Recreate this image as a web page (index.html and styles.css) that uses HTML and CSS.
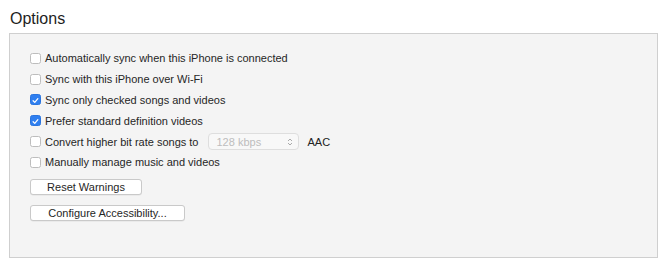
FILE: index.html
```html
<!DOCTYPE html>
<html>
<head>
<meta charset="utf-8">
<link rel="stylesheet" href="styles.css">
</head>
<body>
<h1 class="title">Options</h1>
<div class="panel">
  <label class="row"><span class="cb"></span><span>Automatically sync when this iPhone is connected</span></label>
  <label class="row"><span class="cb"></span><span>Sync with this iPhone over Wi-Fi</span></label>
  <label class="row"><span class="cb on"><svg viewBox="0 0 11 11" width="11" height="11"><path d="M2.6 5.8 L4.6 7.8 L8.4 3.2" fill="none" stroke="#fff" stroke-width="1.5" stroke-linecap="round" stroke-linejoin="round"/></svg></span><span>Sync only checked songs and videos</span></label>
  <label class="row"><span class="cb on"><svg viewBox="0 0 11 11" width="11" height="11"><path d="M2.6 5.8 L4.6 7.8 L8.4 3.2" fill="none" stroke="#fff" stroke-width="1.5" stroke-linecap="round" stroke-linejoin="round"/></svg></span><span>Prefer standard definition videos</span></label>
  <div class="row"><span class="cb"></span><span>Convert higher bit rate songs to</span>
    <span class="select"><span>128 kbps</span><svg viewBox="0 0 6 10" width="6" height="10"><path d="M1 4 L3 2 L5 4 M1 6 L3 8 L5 6" fill="none" stroke="#aaa" stroke-width="1"/></svg></span>
    <span class="aac">AAC</span></div>
  <label class="row"><span class="cb"></span><span>Manually manage music and videos</span></label>
  <div class="buttons">
    <button class="btn reset">Reset Warnings</button>
    <button class="btn config">Configure Accessibility...</button>
  </div>
</div>
</body>
</html>
```
FILE: styles.css
```css
html, body {
  margin: 0;
  padding: 0;
  background: #fff;
  font-family: "Liberation Sans", Arial, sans-serif;
  color: #222;
}
.title {
  margin: 0;
  padding: 9px 0 0 10px;
  height: 24px;
  font-size: 16px;
  font-weight: normal;
  line-height: 19px;
  color: #1e1e1e;
}
.panel {
  margin-left: 9px;
  width: 647px;
  height: 209px;
  border: 1px solid #cfcfcf;
  background: #f4f4f4;
  box-sizing: content-box;
  display: flex;
  flex-direction: column;
  padding-top: 14px;
}
.row {
  display: flex;
  align-items: center;
  height: 20.8px;
  padding-left: 20px;
  font-size: 11px;
  color: #262626;
}
.cb {
  width: 11px;
  height: 11px;
  box-sizing: border-box;
  border: 1px solid #bdbdbd;
  border-radius: 2.5px;
  background: #fff;
  margin-right: 4px;
  display: flex;
  flex: none;
}
.cb.on {
  background: #2f7ff0;
  border-color: #2a74de;
}
.select {
  margin-left: 10px;
  width: 91px;
  height: 17px;
  box-sizing: border-box;
  border: 1px solid #dedede;
  border-radius: 4px;
  background: #f8f8f8;
  display: flex;
  align-items: center;
  justify-content: space-between;
  padding: 0 5px 0 7px;
  color: #bdbdbd;
}
.aac {
  margin-left: 8px;
  color: #222;
}
.buttons {
  display: flex;
  flex-direction: column;
  align-items: flex-start;
  padding-left: 20px;
  padding-top: 6px;
  gap: 10px;
}
.btn {
  font-family: "Liberation Sans", Arial, sans-serif;
  font-size: 11px;
  color: #262626;
  height: 16px;
  line-height: 14px;
  padding: 0;
  border: 1px solid #c9c9c9;
  border-radius: 3px;
  background: #fff;
  box-shadow: 0 0.5px 0.5px rgba(0,0,0,0.08);
}
.reset { width: 112px; }
.config { width: 155px; }
```
